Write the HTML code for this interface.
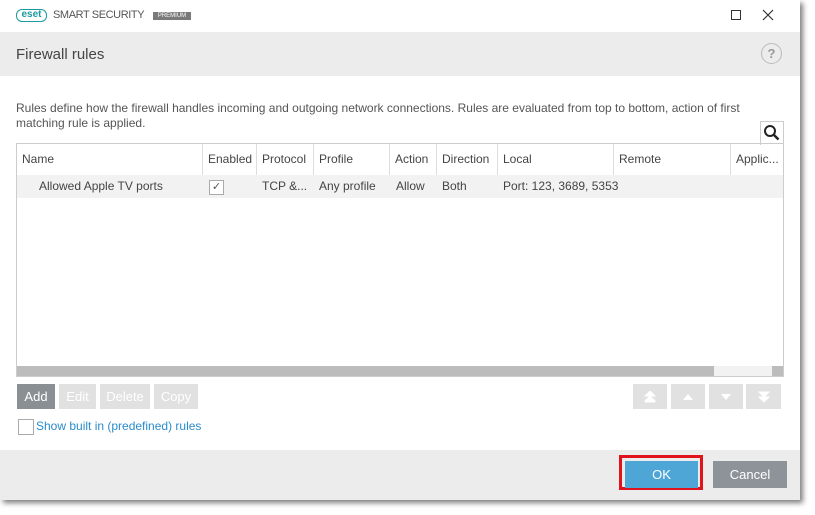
<!DOCTYPE html>
<html><head><style>
body{margin:0;width:815px;height:515px;background:#fff;font-family:"Liberation Sans",sans-serif;position:relative;overflow:hidden}
.win{position:absolute;left:0;top:0;width:800px;height:500px;background:#fff;box-shadow:3px 3px 5px rgba(0,0,0,.5)}
.a{position:absolute}
.t{font-size:12px;color:#333}
.col{position:absolute;top:0;height:31px;border-right:1px solid #ddd;font-size:12px;line-height:31px;color:#444;padding-left:5px;box-sizing:border-box}
.btn{position:absolute;top:384px;height:25px;background:#e1e1e1;color:#fff;font-size:13px;line-height:25px;text-align:center}
.btn svg{position:absolute;left:50%;top:50%;transform:translate(-50%,-50%)}
</style></head><body>
<div class="win">
 <div class="a" style="left:16px;top:9px;width:31px;height:13px;border:1.5px solid #1d9aa0;border-radius:6px;box-sizing:border-box;color:#1d9aa0;font-size:10px;font-weight:bold;line-height:10px;text-align:center">eset</div>
 <div class="a" style="left:53px;top:9px;font-size:11px;color:#555;letter-spacing:-0.4px">SMART SECURITY</div>
 <div class="a" style="left:153px;top:12px;width:38px;height:8px;background:#7a7a7a;color:#fff;font-size:6px;line-height:8px;text-align:center">PREMIUM</div>
 <svg class="a" style="left:730px;top:9px" width="12" height="12"><rect x="1.5" y="1.5" width="9" height="9" fill="none" stroke="#333" stroke-width="1"/></svg>
 <svg class="a" style="left:762px;top:9px" width="12" height="12"><path d="M1 1L11 11M11 1L1 11" stroke="#333" stroke-width="1.2"/></svg>
 <div class="a" style="left:0;top:32px;width:800px;height:44px;background:#ececec"></div>
 <div class="a" style="left:16px;top:46px;font-size:15px;color:#444">Firewall rules</div>
 <div class="a" style="left:761px;top:43px;width:19px;height:19px;border:1.5px solid #bbb;border-radius:50%;color:#999;font-size:13px;font-weight:bold;text-align:center;line-height:19px">?</div>
 <div class="a t" style="left:16px;top:101px;line-height:15px;color:#555;width:760px">Rules define how the firewall handles incoming and outgoing network connections. Rules are evaluated from top to bottom, action of first matching rule is applied.</div>
 <div class="a" style="left:760px;top:121px;width:24px;height:24px;background:#fff;border:1px solid #ccc;border-bottom:none;box-sizing:border-box">
  <svg width="22" height="22" viewBox="0 0 22 22"><circle cx="9" cy="9" r="5" fill="none" stroke="#222" stroke-width="2"/><path d="M12.5 12.5l5 5" stroke="#222" stroke-width="2.5"/></svg></div>
 <div class="a" style="left:16px;top:143px;width:768px;height:234px;border:1px solid #ccc;box-sizing:border-box;overflow:hidden">
  <div class="col" style="left:0;width:186px">Name</div>
  <div class="col" style="left:186px;width:54px">Enabled</div>
  <div class="col" style="left:240px;width:57px">Protocol</div>
  <div class="col" style="left:297px;width:76px">Profile</div>
  <div class="col" style="left:373px;width:47px">Action</div>
  <div class="col" style="left:420px;width:61px">Direction</div>
  <div class="col" style="left:481px;width:116px">Local</div>
  <div class="col" style="left:597px;width:117px">Remote</div>
  <div class="col" style="left:714px;width:60px;border:none">Applic...</div>
  <div class="a" style="left:0;top:31px;width:768px;height:23px;background:#f2f2f2;font-size:12px;line-height:23px;color:#444">
   <span class="a" style="left:22px">Allowed Apple TV ports</span>
   <span class="a" style="left:192px;top:5px;width:13px;height:13px;border:1px solid #aaa;background:#fff;line-height:13px;text-align:center;font-size:11px;color:#555">✓</span>
   <span class="a" style="left:245px">TCP &amp;...</span>
   <span class="a" style="left:302px">Any profile</span>
   <span class="a" style="left:379px">Allow</span>
   <span class="a" style="left:425px">Both</span>
   <span class="a" style="left:486px">Port: 123, 3689, 5353</span>
  </div>
  <div class="a" style="left:0;top:222px;width:768px;height:11px;background:#bcbcbc"></div>
  <div class="a" style="left:697px;top:222px;width:58px;height:11px;background:#f2f2f2"></div>
 </div>
 <div class="btn" style="left:17px;width:38px;background:#8a8f94">Add</div>
 <div class="btn" style="left:59px;width:37px">Edit</div>
 <div class="btn" style="left:100px;width:50px">Delete</div>
 <div class="btn" style="left:154px;width:44px">Copy</div>
 <div class="btn" style="left:633px;width:34px"><svg width="12" height="12"><path d="M6 0L11 5H1Z M6 5L11 10H1Z M1 11H11" fill="#fff" stroke="#fff" stroke-width="1"/></svg></div>
 <div class="btn" style="left:671px;width:34px"><svg width="12" height="8"><path d="M6 1L11 7H1Z" fill="#fff"/></svg></div>
 <div class="btn" style="left:709px;width:34px"><svg width="12" height="8"><path d="M6 7L11 1H1Z" fill="#fff"/></svg></div>
 <div class="btn" style="left:746px;width:35px"><svg width="12" height="12"><path d="M6 11L11 6H1Z M6 6L11 1H1Z" fill="#fff" stroke="#fff" stroke-width="1"/></svg></div>
 <div class="a" style="left:18px;top:419px;width:14px;height:14px;border:1px solid #aaa"></div>
 <div class="a" style="left:36px;top:419px;font-size:12px;color:#2a8ccc">Show built in (predefined) rules</div>
 <div class="a" style="left:0;top:450px;width:800px;height:50px;background:#ececec"></div>
 <div class="a" style="left:619px;top:455px;width:84px;height:35px;border:3px solid #e0141c;box-sizing:border-box"></div>
 <div class="a" style="left:625px;top:461px;width:73px;height:27px;background:#4ea6d6;color:#fff;font-size:13px;line-height:27px;text-align:center">OK</div>
 <div class="a" style="left:713px;top:461px;width:74px;height:27px;background:#8e9399;color:#fff;font-size:13px;line-height:27px;text-align:center">Cancel</div>
</div>
</body></html>
